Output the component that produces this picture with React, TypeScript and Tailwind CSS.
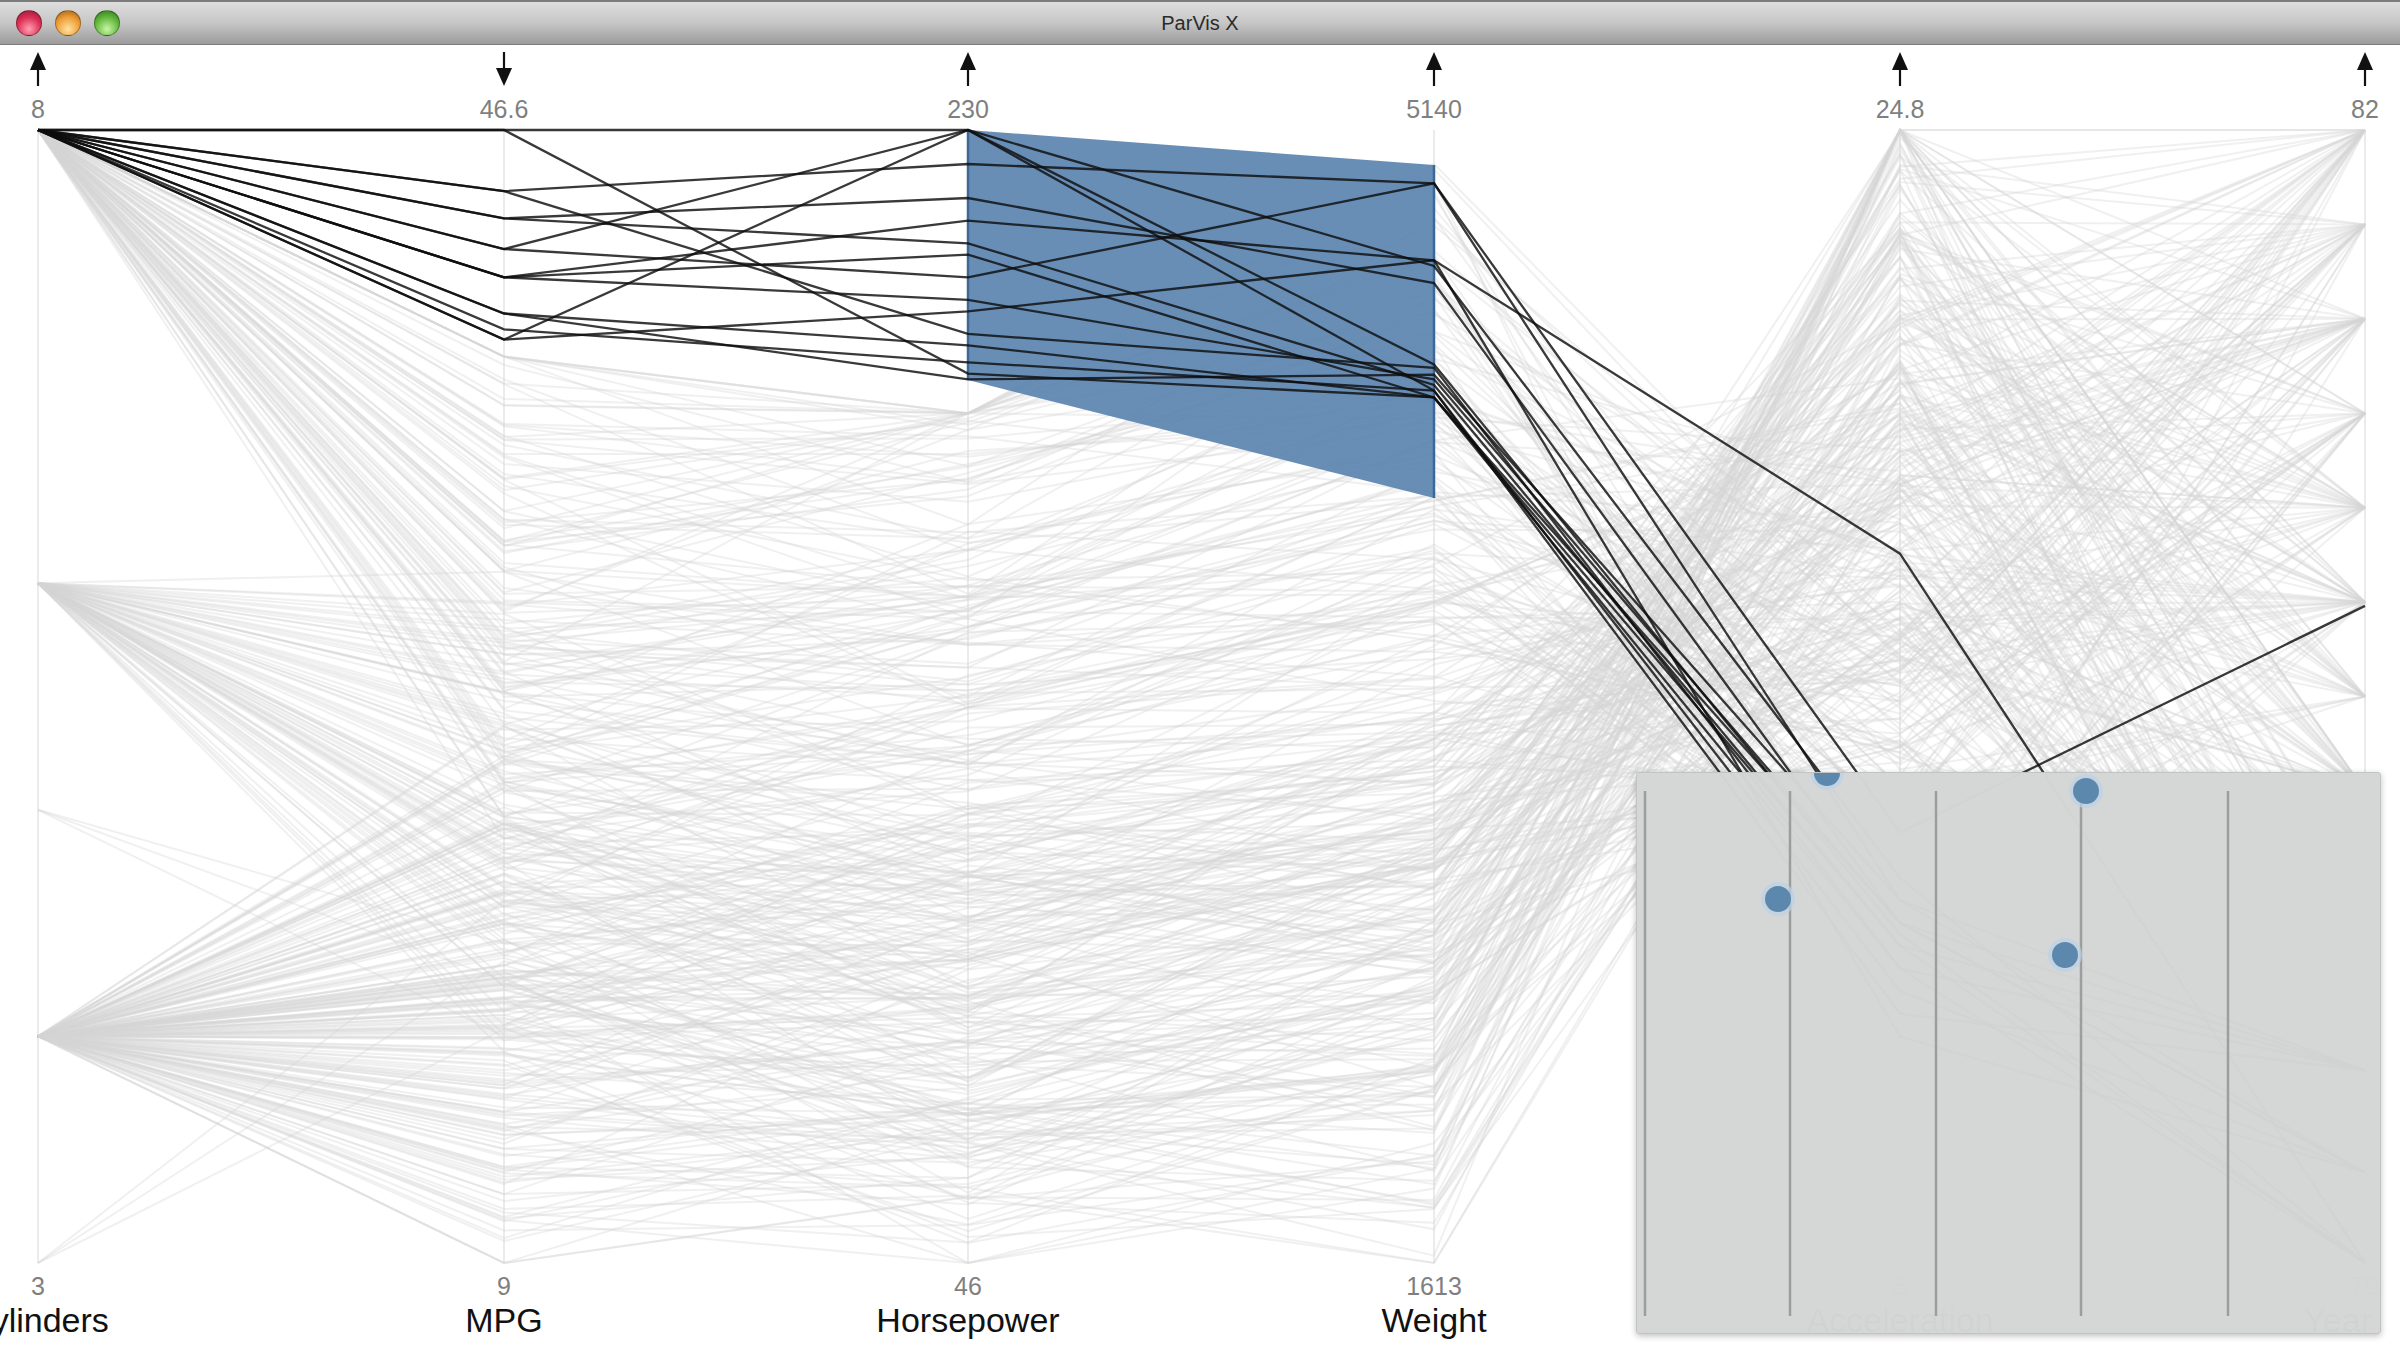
import React from 'react'

// parallel coordinates window, coordinates are page pixels
const AXES = [38, 504, 968, 1434, 1900, 2365]
const Y0 = 130
const Y1 = 1263
const yAt = (n: number) => Y0 + n * (Y1 - Y0)

const TOP = ['8', '46.6', '230', '5140', '24.8', '82']
const BOTTOM = ['3', '9', '46', '1613', '8', '70']
const NAMES = ['Cylinders', 'MPG', 'Horsepower', 'Weight', 'Acceleration', 'Year']
const UP = [true, false, true, true, true, true]

function mulberry32(a: number) {
  return () => {
    a |= 0
    a = (a + 0x6d2b79f5) | 0
    let t = Math.imul(a ^ (a >>> 15), 1 | a)
    t = (t + Math.imul(t ^ (t >>> 7), 61 | t)) ^ t
    return ((t ^ (t >>> 14)) >>> 0) / 4294967296
  }
}

const clamp = (v: number, lo: number, hi: number) => Math.max(lo, Math.min(hi, v))

function makeCars() {
  const rnd = mulberry32(11)
  const noise = (s: number) => (rnd() * 2 - 1) * s
  const cars: number[][] = []
  for (let i = 0; i < 380; i++) {
    const r = rnd()
    const cyl = r < 0.5 ? 4 : r < 0.515 ? 3 : r < 0.525 ? 5 : r < 0.74 ? 6 : 8
    let p = 0.02 + rnd() * 0.4
    if (cyl === 8) p = 0.6 + rnd() * 0.35
    if (cyl === 6) p = 0.32 + rnd() * 0.3
    if (cyl === 3 || cyl === 5) p = 0.2 + rnd() * 0.2
    cars.push([
      (8 - cyl) / 5,
      clamp(0.22 + (1 - p) * 0.72 + noise(0.14), 0.2, 1),
      clamp(0.18 + (1 - p) * 0.82 + noise(0.1), 0.25, 1),
      clamp(0.05 + (1 - p) * 0.9 + noise(0.1), 0.02, 1),
      clamp(0.12 + p * 0.55 + noise(0.28), 0, 1),
      Math.floor(rnd() * 13) / 12,
    ])
  }
  return cars
}

const GRAY = makeCars()

// cars inside the horsepower brush
const SELECTED = [
  [0, 0.0, 0.215, 0.236, 0.7, 0.92],
  [0, 0.0, 0.0, 0.12, 0.66, 1.0],
  [0, 0.054, 0.03, 0.047, 0.62, 0.42],
  [0, 0.054, 0.18, 0.21, 0.74, 0.83],
  [0, 0.078, 0.06, 0.135, 0.7, 0.92],
  [0, 0.078, 0.1, 0.225, 0.72, 1.0],
  [0, 0.105, 0.13, 0.047, 0.68, 0.83],
  [0, 0.105, 0.0, 0.23, 0.76, 0.92],
  [0, 0.13, 0.08, 0.115, 0.374, 1.0],
  [0, 0.13, 0.15, 0.22, 0.7, 0.83],
  [0, 0.13, 0.11, 0.236, 0.74, 1.0],
  [0, 0.162, 0.22, 0.216, 0.68, 0.92],
  [0, 0.176, 0.205, 0.23, 0.78, 0.83],
  [0, 0.185, 0.0, 0.207, 0.71, 1.0],
  [0, 0.185, 0.16, 0.115, 0.8, 0.92],
  [0, 0.162, 0.19, 0.236, 0.72, 0.83],
]

const pts = (car: number[]) => car.map((v, i) => `${AXES[i]},${yAt(v).toFixed(1)}`).join(' ')

function TrafficLight({ tone }: { tone: 'red' | 'yellow' | 'green' }) {
  const cls =
    tone === 'red'
      ? 'bg-[radial-gradient(circle_at_50%_75%,#ff9fb0,#dc2f55_55%,#8c1a33)]'
      : tone === 'yellow'
        ? 'bg-[radial-gradient(circle_at_50%_75%,#ffe2a0,#ee9d36_55%,#95591a)]'
        : 'bg-[radial-gradient(circle_at_50%_75%,#c9f5a8,#62b83c_55%,#2f6d1b)]'
  return <div className={`h-[26px] w-[26px] rounded-full border border-black/30 ${cls}`} />
}

function Arrow({ x, up }: { x: number; up: boolean }) {
  return up ? (
    <g>
      <line x1={x} y1={68} x2={x} y2={86} stroke="#111" strokeWidth={2.2} />
      <polygon points={`${x},52 ${x - 8},70 ${x + 8},70`} fill="#111" />
    </g>
  ) : (
    <g>
      <line x1={x} y1={52} x2={x} y2={70} stroke="#111" strokeWidth={2.2} />
      <polygon points={`${x - 8},68 ${x + 8},68 ${x},86`} fill="#111" />
    </g>
  )
}

function Inspector() {
  const lines = [8, 153, 299, 444, 591]
  const dots = [
    [190, 0],
    [141, 126],
    [449, 18],
    [428, 182],
  ]
  return (
    <div className="absolute left-[1636px] top-[727px] h-[562px] w-[745px] overflow-hidden rounded-[3px] border border-[#c2c4c4] bg-[#d4d6d6]/[0.985] shadow-[0_2px_6px_rgba(0,0,0,0.25)]">
      <svg width={745} height={562} className="block">
        {lines.map((x) => (
          <line key={x} x1={x} y1={18} x2={x} y2={543} stroke="#9c9e9e" strokeWidth={2.5} />
        ))}
        {dots.map(([x, y]) => (
          <g key={`${x}-${y}`}>
            <circle cx={x} cy={y} r={17} fill="#bcd2e6" opacity={0.7} />
            <circle cx={x} cy={y} r={13} fill="#5d88ae" />
          </g>
        ))}
      </svg>
    </div>
  )
}

export default function App() {
  return (
    <div className="flex h-[1350px] w-[2400px] flex-col overflow-hidden bg-white font-['Liberation_Sans','Arial',sans-serif]">
      {/* window title bar */}
      <div className="relative flex h-[45px] shrink-0 items-center border-t-2 border-b border-t-[#7c7c7c] border-b-[#7a7a7a] bg-gradient-to-b from-[#dedede] via-[#c6c6c6] to-[#9c9c9c]">
        <div className="flex items-center gap-[13px] pl-[16px]">
          <TrafficLight tone="red" />
          <TrafficLight tone="yellow" />
          <TrafficLight tone="green" />
        </div>
        <div className="absolute inset-0 flex items-center justify-center text-[20px] text-[#2b2b2b]">
          ParVis X
        </div>
      </div>

      {/* plot */}
      <div className="relative flex-1">
        <svg width={2400} height={1305} viewBox="0 45 2400 1305" className="block">
          {AXES.map((x) => (
            <line key={x} x1={x} y1={Y0} x2={x} y2={Y1} stroke="#e4e4e4" strokeWidth={1.5} />
          ))}
          {GRAY.map((car, i) => (
            <polyline key={i} points={pts(car)} fill="none" stroke="#d6d6d6" strokeOpacity={0.36} strokeWidth={2} />
          ))}

          <polygon points={`968,130 1434,165 1434,498 968,380`} fill="#5b84b0" fillOpacity={0.92} />
          <line x1={968} y1={130} x2={968} y2={380} stroke="#3c6897" strokeWidth={2.5} />
          <line x1={1434} y1={165} x2={1434} y2={498} stroke="#3c6897" strokeWidth={2.5} />

          {SELECTED.map((car, i) => (
            <polyline key={i} points={pts(car)} fill="none" stroke="#0d0d0d" strokeOpacity={0.82} strokeWidth={2.3} />
          ))}

          {AXES.map((x, i) => {
            const last = i === AXES.length - 1
            return (
              <g key={x}>
                <Arrow x={x} up={UP[i]} />
                <text x={x} y={118} textAnchor="middle" fontSize={25} fill="#7f7f7f">
                  {TOP[i]}
                </text>
                <text x={x} y={1295} textAnchor="middle" fontSize={25} fill="#7f7f7f">
                  {BOTTOM[i]}
                </text>
                <text x={last ? 2372 : x} y={1332} textAnchor={last ? 'end' : 'middle'} fontSize={34} fill="#111">
                  {NAMES[i]}
                </text>
              </g>
            )
          })}
        </svg>
        <Inspector />
      </div>
    </div>
  )
}
